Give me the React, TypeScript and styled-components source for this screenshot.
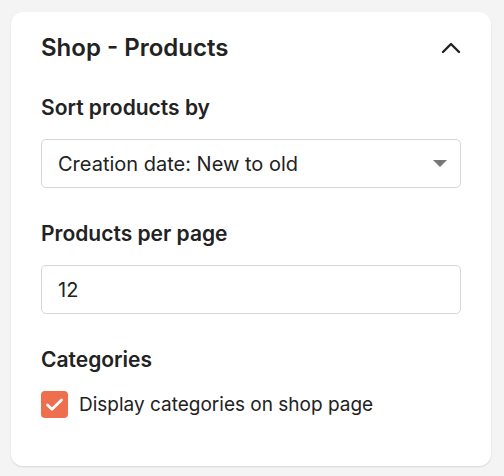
import React, { useState } from 'react'
import styled, { createGlobalStyle } from 'styled-components'

const GlobalStyle = createGlobalStyle`
  html, body {
    margin: 0;
    padding: 0;
    background: #f4f4f4;
  }
  body {
    font-family: Inter, "Liberation Sans", sans-serif;
    color: #222;
  }
`

const Page = styled.div`
  padding: 12px 13px 10px 11px;
`

const Card = styled.section`
  background: #fff;
  border-radius: 12px;
  box-shadow: 0 1px 2px rgba(0, 0, 0, 0.12);
  padding: 21px 30px 48px 30px;
`

const Header = styled.div`
  display: flex;
  align-items: center;
  justify-content: space-between;
  margin-bottom: 32px;
`

const Title = styled.h2`
  margin: 0;
  font-size: 24px;
  font-weight: 600;
  line-height: 30px;
`

const Toggle = styled.button`
  border: 0;
  background: none;
  padding: 0;
  display: flex;
  cursor: pointer;
  color: #222;
`

const Field = styled.div`
  display: flex;
  flex-direction: column;
  gap: 18px;
  margin-bottom: 33px;

  &:last-child {
    margin-bottom: 0;
  }
`

const Label = styled.label`
  font-size: 21px;
  font-weight: 600;
  line-height: 26px;
`

const SelectBox = styled.div`
  display: flex;
  align-items: center;
  height: 49px;
  box-sizing: border-box;
  border: 1px solid #d6d6d6;
  border-radius: 5px;
  padding: 0 13px 0 16px;
  font-size: 20px;
`

const Caret = styled.span`
  margin-left: auto;
  width: 0;
  height: 0;
  border-left: 7px solid transparent;
  border-right: 7px solid transparent;
  border-top: 7px solid #777;
`

const Input = styled.input`
  height: 49px;
  box-sizing: border-box;
  border: 1px solid #d6d6d6;
  border-radius: 5px;
  padding: 0 16px;
  font: inherit;
  font-size: 20px;
  color: #222;
  outline: none;
`

const CheckRow = styled.label`
  display: flex;
  align-items: center;
  gap: 11px;
  font-size: 19px;
  cursor: pointer;
`

const Box = styled.span<{ $on: boolean }>`
  flex: none;
  width: 27px;
  height: 27px;
  border-radius: 4px;
  background: ${(p) => (p.$on ? '#ee6e4e' : '#fff')};
  border: ${(p) => (p.$on ? '0' : '1px solid #ccc')};
  display: flex;
  box-sizing: border-box;
`

export default function App() {
  const [perPage, setPerPage] = useState('12')
  const [showCats, setShowCats] = useState(true)

  return (
    <Page>
      <GlobalStyle />
      <Card>
        <Header>
          <Title>Shop - Products</Title>
          <Toggle aria-label="Collapse">
            <svg width="20" height="20" viewBox="0 0 20 20" fill="none">
              <path d="M2 14 L10 6 L18 14" stroke="#222" strokeWidth="2.4" strokeLinecap="round" strokeLinejoin="round" />
            </svg>
          </Toggle>
        </Header>

        <Field>
          <Label>Sort products by</Label>
          <SelectBox>
            Creation date: New to old
            <Caret />
          </SelectBox>
        </Field>

        <Field>
          <Label>Products per page</Label>
          <Input value={perPage} onChange={(e) => setPerPage(e.target.value)} />
        </Field>

        <Field>
          <Label>Categories</Label>
          <CheckRow onClick={() => setShowCats(!showCats)}>
            <Box $on={showCats}>
              {showCats && (
                <svg width="27" height="27" viewBox="0 0 27 27" fill="none">
                  <path d="M6.5 14 L11 18.2 L20.5 9" stroke="#fff" strokeWidth="2.8" strokeLinecap="round" strokeLinejoin="round" />
                </svg>
              )}
            </Box>
            Display categories on shop page
          </CheckRow>
        </Field>
      </Card>
    </Page>
  )
}
